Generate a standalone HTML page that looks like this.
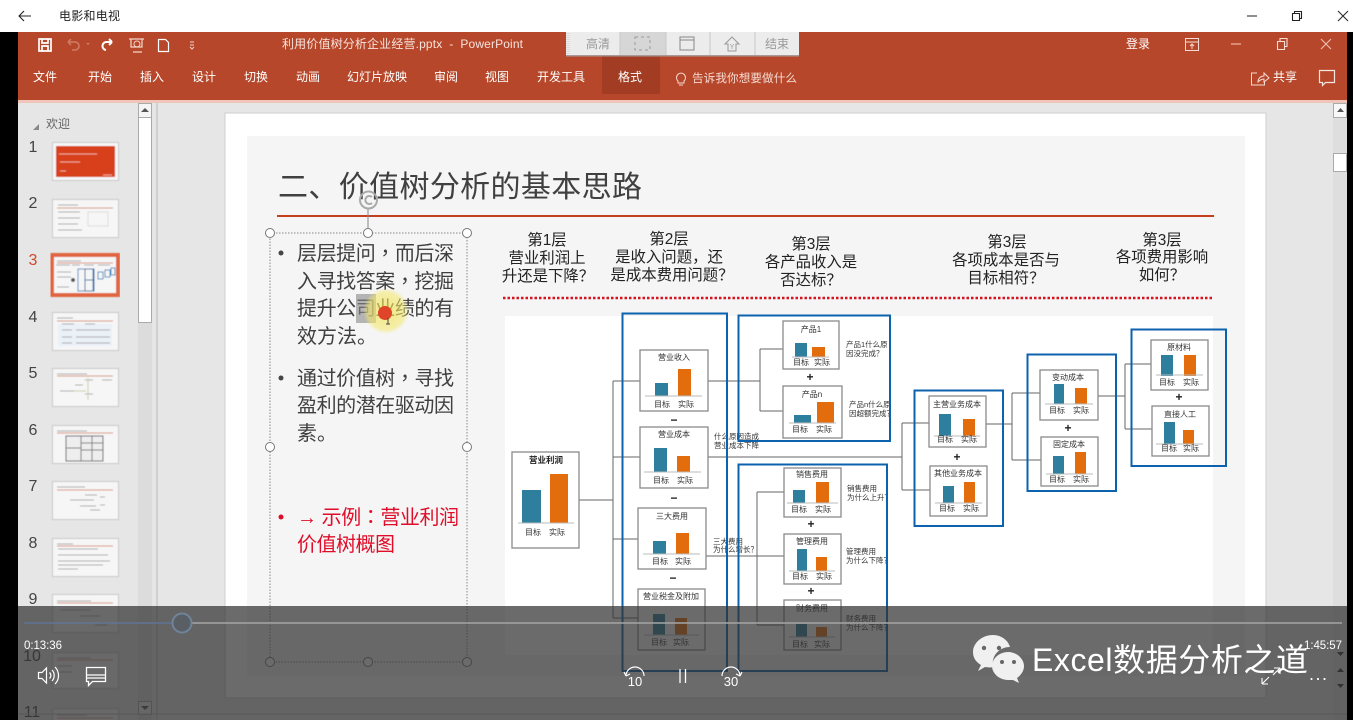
<!DOCTYPE html>
<html><head><meta charset="utf-8"><title>电影和电视</title>
<style>
html,body{margin:0;padding:0;background:#000;width:1353px;height:720px;overflow:hidden}
svg{display:block;font-family:"Liberation Sans","Noto Sans CJK SC",sans-serif}
.b{fill:#fff;stroke:#8a8a8a;stroke-width:1.3}.t{fill:#2f7f9d}.o{fill:#e36c0a}
.l{font-size:8px;fill:#333;text-anchor:middle}.h{font-size:8px;fill:#333;text-anchor:middle}
.n{font-size:7.5px;fill:#333}.bl{fill:none;stroke:#0b62ad;stroke-width:2}
.ln{stroke:#666;stroke-width:1;fill:none}.bs{stroke:#bbb;stroke-width:1}
.p{font-size:12px;font-weight:bold;fill:#222;text-anchor:middle}
.hd{font-size:15.4px;fill:#222;text-anchor:middle}
.tab{font-size:12px;fill:#fff}.bt{font-size:20px;fill:#404040}
.pc{font-family:"Noto Sans CJK TC",sans-serif}
.num{font-size:16px;fill:#444;text-anchor:middle}
.th{fill:#f6f6f6;stroke:#c8c8c8;stroke-width:1}
.tl{stroke:#aaa;stroke-width:1}.tr{stroke:#d98a75;stroke-width:1}
.hn{fill:#fff;stroke:#777;stroke-width:1}
.ic{fill:none;stroke:#fff;stroke-width:1.3}
.tb{font-size:12px;fill:#999;text-anchor:middle}
</style></head><body>
<svg width="1353" height="720" viewBox="0 0 1353 720" xmlns="http://www.w3.org/2000/svg">
<defs><radialGradient id="y"><stop offset="0" stop-color="#f2e04a" stop-opacity=".85"/><stop offset=".8" stop-color="#f4e86a" stop-opacity=".7"/><stop offset="1" stop-color="#f4e86a" stop-opacity="0"/></radialGradient>
<filter id="s" x="-2%" y="-2%" width="104%" height="104%"><feGaussianBlur stdDeviation=".35"/></filter>
<filter id="tf" x="-2%" y="-2%" width="104%" height="104%"><feGaussianBlur stdDeviation=".55"/></filter>
<filter id="u" x="-2%" y="-2%" width="104%" height="104%"><feGaussianBlur stdDeviation=".25"/></filter></defs>
<rect width="1353" height="720" fill="#000"/>
<rect width="1353" height="32" fill="#fff"/>
<path d="M31 16H19M24 11l-5 5 5 5" fill="none" stroke="#222" stroke-width="1.1"/>
<text x="59" y="20" font-size="12" fill="#222" textLength="61">电影和电视</text>
<path d="M1247 16h10" stroke="#222" stroke-width="1"/>
<path d="M1292.500 13.500h7v7h-7zM1294.500 13.500v-2h7v7h-2" fill="none" stroke="#222" stroke-width="1.100"/>
<path d="M1338 11l10 10M1348 11l-10 10" stroke="#222" stroke-width="1"/>

<rect x="18" y="32" width="1329" height="688" fill="#e6e6e6"/>
<rect x="18" y="32" width="1329" height="68" fill="#b7472a"/>
<rect x="18" y="100" width="1329" height="3" fill="#eec5b8"/>
<rect x="602" y="56" width="58" height="38" fill="#a23d24"/>

<!-- QAT -->
<path d="M39 39h12v12h-12zM42 39v4h6v-4M42 51v-5h6v5" fill="none" stroke="#fff" stroke-width="1.700"/>
<path d="M68 42l3-3M68 42l3 3M68 42h7a3.500 3.500 0 0 1 0 8h-3" fill="none" stroke="#cf7d65" stroke-width="1.500"/>
<path d="M86 43l2 2 2-2" fill="#cf7d65"/>
<path d="M112 42l-3-3M112 42l-3 3M112 42h-5a4 4 0 0 0-1 8" fill="none" stroke="#fff" stroke-width="2"/>
<path d="M129 39h15M131 39v8h11v-8M133 52h9" fill="none" stroke="#f3d5cc" stroke-width="1.200"/><circle cx="137" cy="44" r="3" fill="none" stroke="#f3d5cc"/>
<path d="M158.500 39.500h7l3 3v9h-10z" fill="none" stroke="#fff" stroke-width="1.200"/>
<path d="M190 42h4M190 45h4M190 47l2 2 2-2" fill="none" stroke="#f3d5cc"/>
<text x="282" y="48" font-size="12" fill="#f7e3dd" textLength="241" xml:space="preserve">利用价值树分析企业经营.pptx  -  PowerPoint</text>

<!-- Floating toolbar -->
<rect x="566" y="32" width="233" height="23" fill="#ececec"/>
<rect x="566" y="55" width="233" height="1.500" fill="#a99"/>
<path d="M567 33v21M569 33v21" stroke="#ccc" stroke-dasharray="1 1"/>
<rect x="620" y="32" width="46" height="23" fill="#d6d6d6"/>
<path d="M620 32v23M666 32v23M710 32v23M755 32v23" stroke="#c8c8c8"/>
<text class="tb" x="598" y="48">高清</text>
<rect x="635" y="37" width="15" height="13" fill="none" stroke="#999" stroke-dasharray="3 3"/>
<path d="M680 37h14v13h-14zM680 40h14" fill="none" stroke="#888"/>
<path d="M725 44l7-7 7 7h-3v7h-8v-7z" fill="none" stroke="#999"/><text x="732" y="49" font-size="7" fill="#999" text-anchor="middle">Y</text>
<text class="tb" x="777" y="48">结束</text>

<!-- Tabs -->
<g class="tab-g">
<text class="tab" x="33" y="81">文件</text><text class="tab" x="88" y="81">开始</text><text class="tab" x="140" y="81">插入</text><text class="tab" x="192" y="81">设计</text><text class="tab" x="244" y="81">切换</text><text class="tab" x="296" y="81">动画</text><text class="tab" x="347" y="81">幻灯片放映</text><text class="tab" x="434" y="81">审阅</text><text class="tab" x="485" y="81">视图</text><text class="tab" x="537" y="81">开发工具</text><text class="tab" x="618" y="81">格式</text>
</g>
<path d="M678 81a4.500 4.500 0 1 1 6 0v2h-6zM679 85h4" fill="none" stroke="#f6d9d0"/>
<text x="692" y="82" font-size="11.600" fill="#f6d9d0" textLength="105">告诉我你想要做什么</text>
<text class="tab" x="1126" y="48">登录</text>
<path d="M1185.500 38.500h13v12h-13zM1185.500 42h13M1192 44v5M1190 46l2-2 2 2" fill="none" stroke="#f6dcd4"/>
<path d="M1231 44h10" stroke="#f0b8a8" stroke-width="1.200"/>
<path d="M1277.500 41.500h7v8h-7zM1280 41v-2.500h7v8h-2.500" fill="none" stroke="#f6dcd4" stroke-width="1.100"/>
<path d="M1321 39l10 10M1331 39l-10 10" stroke="#f0c0b0" stroke-width="1.100"/>
<path d="M1257 73h-5.500v12h13v-4M1258 82c0-4 3-6 6-6v-3l5 5-5 4v-3c-2 0-4 1-6 3z" fill="none" stroke="#f6dcd4" stroke-width="1"/>
<text class="tab" x="1273" y="81">共享</text>
<path d="M1319.500 70.500h15v12h-9l-3 3v-3h-3z" fill="none" stroke="#f6e5e0" stroke-width="1.200"/>

<!-- Left panel -->
<rect x="138" y="103" width="14" height="617" fill="#dcdcdc"/>
<rect x="138.500" y="103.500" width="13" height="14" fill="#f5f5f5" stroke="#aaa"/>
<path d="M141 112l4-4 4 4z" fill="#555"/>
<rect x="138.500" y="117.500" width="13" height="205" fill="#fff" stroke="#aaa"/>
<rect x="138.500" y="701.500" width="13" height="13" fill="#f0f0f0" stroke="#aaa"/>
<path d="M141 706l4 4 4-4z" fill="#555"/>
<path d="M157 103v617" stroke="#c8c8c8" stroke-width="1.500"/>
<path d="M33 130l6-6v6z" fill="#888"/>
<text x="46" y="128" font-size="12" fill="#666">欢迎</text>
<text class="num" x="33" y="152">1</text><text class="num" x="33" y="208">2</text><text class="num" x="33" y="265" style="fill:#d24726">3</text><text class="num" x="33" y="322">4</text><text class="num" x="33" y="378">5</text><text class="num" x="33" y="435">6</text><text class="num" x="33" y="491">7</text><text class="num" x="33" y="548">8</text><text class="num" x="33" y="604">9</text><text class="num" x="32" y="661">10</text><text class="num" x="32" y="717">11</text>

<g filter="url(#tf)">
<rect class="th" x="52.500" y="142.500" width="66" height="38"/>
<rect x="56" y="146" width="59" height="31" fill="#d8411f"/>
<path d="M59 154h38M60 162h20M60 171h6M103 175h9" stroke="#f0a994" stroke-width="1"/>

<rect class="th" x="52.500" y="199.500" width="66" height="38"/>
<path class="tr" d="M57 208h56"/><path class="tl" d="M58 205h20M58 212h22M58 218h22M58 224h20M58 230h24"/><path d="M88 212h20v14h-20z" fill="none" stroke="#ddd"/>

<rect x="52" y="255" width="66" height="40" fill="#f6f6f6" stroke="#e0653f" stroke-width="4"/>
<path class="tl" d="M57 261h24M56 265h14M72 265h8M84 265h10M98 265h12M57 272h14M57 277h14M57 287h12"/>
<path class="tr" d="M57 263h56"/>
<path d="M78 269h15v22h-15z" fill="none" stroke="#3a88c0"/><rect x="85" y="269" width="9" height="11" fill="none" stroke="#2a70a8"/><rect x="85" y="280" width="9" height="11" fill="none" stroke="#2a70a8"/><rect x="98" y="272" width="5" height="7" fill="none" stroke="#3a88c0"/><rect x="105" y="270" width="5" height="7" fill="none" stroke="#3a88c0"/><rect x="111" y="268" width="4" height="7" fill="none" stroke="#3a88c0"/>
<circle cx="73" cy="280" r="2" fill="#555"/>

<rect class="th" x="52.500" y="312.500" width="66" height="38"/>
<path class="tr" d="M57 321h56"/><rect x="58" y="324" width="54" height="22" fill="#eaf1f7"/><path class="tl" d="M57 318h16M62 324h12M85 324h10M62 330h10M76 330h34M62 337h10M76 337h34M62 343h10M76 343h34"/>

<rect class="th" x="52.500" y="368.500" width="66" height="38"/>
<path class="tr" d="M57 376h56"/><path class="tl" d="M57 374h30M60 391h14M75 385h8M85 380h8M85 394h8M102 380h10"/><path d="M88 378v22M74 391h12" fill="none" stroke="#cca"/>

<rect class="th" x="52.500" y="425.500" width="66" height="38"/>
<path class="tr" d="M57 433h56"/><path class="tl" d="M57 431h30"/><rect x="66" y="436" width="37" height="25" fill="#eee" stroke="#555"/><path d="M81 436v25M92 436v25M81 443h22M81 450h22M66 448h15" stroke="#777" fill="none"/>

<rect class="th" x="52.500" y="481.500" width="66" height="38"/>
<path class="tr" d="M57 490h56"/><path class="tl" d="M57 487h28M70 500h24M80 506h16M85 495h12M90 510h10M100 497h5M100 505h5"/>

<rect class="th" x="52.500" y="538.500" width="66" height="38"/>
<path class="tr" d="M57 546h56"/><path class="tl" d="M57 544h16M58 549h40M58 555h50M58 561h52M58 565h45M58 569h20"/>

<rect class="th" x="52.500" y="594.500" width="66" height="38"/>
<path class="tr" d="M57 603h56"/><path class="tl" d="M57 601h34M60 610h30M80 616h20M95 625h12"/>
<rect class="th" x="52.500" y="652.500" width="66" height="36"/>
<path class="tr" d="M57 660h56"/><path class="tl" d="M57 658h34M58 666h14M58 672h14"/>
<rect class="th" x="52.500" y="708.500" width="66" height="20"/>
<path class="tl" d="M57 715h30"/><path class="tr" d="M57 718h56"/>
</g>

<!-- Right scrollbar -->
<rect x="1333" y="103" width="14" height="617" fill="#dedede"/>
<rect x="1333.500" y="103.500" width="13" height="14" fill="#f8f8f8" stroke="#aaa"/><path d="M1337 112l3.500-4 3.500 4z" fill="#555"/>
<rect x="1333.500" y="153.500" width="13" height="18" fill="#fff" stroke="#aaa"/>
<path d="M1337 652l3.500 4 3.500-4zM1337 672l3.500-4 3.500 4zM1337 684l3.500 4 3.500-4z" fill="#333"/>

<!-- Slide -->
<rect x="225" y="113" width="1041" height="585" fill="#fff" stroke="#cfcfcf"/>
<rect x="247" y="136" width="998" height="540" fill="#f5f5f5"/>
<g filter="url(#u)">
<text x="278" y="197" font-size="30" fill="#404040" textLength="364">二、价值树分析的基本思路</text>
<path d="M277 216h937" stroke="#c33f1f" stroke-width="2"/>

<circle cx="281" cy="253" r="2.500" fill="#444"/>
<text class="bt" x="297" y="260" textLength="157">层层提问<tspan class="pc">，</tspan>而后深</text>
<text class="bt" x="297" y="288" textLength="157">入寻找答案<tspan class="pc">，</tspan>挖掘</text>
<text class="bt" x="297" y="315" textLength="157">提升公司业绩的有</text>
<text class="bt" x="297" y="343">效方法。</text>
<circle cx="281" cy="378" r="2.500" fill="#444"/>
<text class="bt" x="297" y="385" textLength="157">通过价值树<tspan class="pc">，</tspan>寻找</text>
<text class="bt" x="297" y="412" textLength="157">盈利的潜在驱动因</text>
<text class="bt" x="297" y="440">素。</text>
<circle cx="281" cy="517" r="2.500" fill="#e0102a"/>
<text class="bt" x="297" y="524" textLength="162" style="fill:#e0102a">→ 示例<tspan class="pc">：</tspan>营业利润</text>
<text class="bt" x="297" y="551" textLength="98" style="fill:#e0102a">价值树概图</text>
</g>

<rect x="356" y="294" width="20" height="29" fill="#888" opacity=".6"/>
<circle cx="386" cy="311" r="23" fill="url(#y)" opacity=".8"/>
<circle cx="385" cy="313" r="7" fill="#e0452a"/>
<path d="M388 318v6M386 324h4" stroke="#444"/>

<rect x="270" y="233" width="197" height="429" fill="none" stroke="#888" stroke-dasharray="1.500 1.500"/>
<path d="M368 208v25" stroke="#888"/>
<circle cx="368.500" cy="200" r="8.500" fill="none" stroke="#aaa" stroke-width="2"/><path d="M372 203a4 4 0 1 1 0-6" fill="none" stroke="#aaa" stroke-width="2"/>
<circle class="hn" cx="270" cy="233" r="4.500"/><circle class="hn" cx="368" cy="233" r="4.500"/><circle class="hn" cx="467" cy="233" r="4.500"/><circle class="hn" cx="270" cy="447" r="4.500"/><circle class="hn" cx="467" cy="447" r="4.500"/><circle class="hn" cx="270" cy="662" r="4.500"/><circle class="hn" cx="368" cy="662" r="4.500"/><circle class="hn" cx="467" cy="662" r="4.500"/>

<!-- Headers -->
<g filter="url(#u)">
<text class="hd" x="547" y="245">第1层</text><text class="hd" x="547" y="263">营业利润上</text><text class="hd" x="548" y="281">升还是下降？</text>
<text class="hd" x="669" y="244">第2层</text><text class="hd" x="669" y="262">是收入问题，还</text><text class="hd" x="672" y="280">是成本费用问题？</text>
<text class="hd" x="811" y="249">第3层</text><text class="hd" x="811" y="267">各产品收入是</text><text class="hd" x="811" y="285">否达标？</text>
<text class="hd" x="1007" y="247">第3层</text><text class="hd" x="1006" y="265">各项成本是否与</text><text class="hd" x="1006" y="283">目标相符？</text>
<text class="hd" x="1162" y="245">第3层</text><text class="hd" x="1162" y="262">各项费用影响</text><text class="hd" x="1162" y="280">如何？</text>
</g>
<path d="M503 298h710" stroke="#d5121e" stroke-width="2.500" stroke-dasharray="2.500 2"/>

<!-- Diagram -->
<rect x="505" y="316" width="708" height="339" fill="#fff"/>
<g filter="url(#s)">
<path class="ln" d="M579 500h34M613 381v237M613 381h27M613 457h27M613 539h25M613 618h25M708 381h52M760 349v62M760 349h23M760 411h23M707 457h195M902 423v67M902 423h27M902 490h28M706 556h78M757 492v133M757 492h27M757 625h27M986 424h26M1012 393v67M1012 393h28M1012 460h29M1098 396h27M1125 364v65M1125 364h26M1125 429h27" stroke-width="1.200"/>

<rect class="b" x="512" y="452" width="67" height="96"/><rect class="t" x="522" y="490" width="19" height="33"/><rect class="o" x="550" y="474" width="18" height="49"/><path class="bs" d="M518 523h56"/>
<text class="p" x="546" y="463" style="font-size:8.500px">营业利润</text><text class="l" x="533" y="535">目标</text><text class="l" x="557" y="535">实际</text>

<rect class="b" x="640" y="350" width="68" height="61"/><rect class="t" x="655" y="383" width="13" height="13"/><rect class="o" x="678" y="369" width="13" height="27"/><path class="bs" d="M645 396h57"/>
<text class="h" x="674" y="360">营业收入</text><text class="l" x="662" y="407">目标</text><text class="l" x="686" y="407">实际</text>

<rect class="b" x="640" y="427" width="68" height="61"/><rect class="t" x="654" y="448" width="13" height="24"/><rect class="o" x="677" y="456" width="13" height="16"/><path class="bs" d="M644 472h57"/>
<text class="h" x="674" y="437">营业成本</text><text class="l" x="661" y="483">目标</text><text class="l" x="685" y="483">实际</text>

<rect class="b" x="638" y="508" width="68" height="61"/><rect class="t" x="653" y="541" width="13" height="13"/><rect class="o" x="676" y="533" width="13" height="21"/><path class="bs" d="M643 554h57"/>
<text class="h" x="672" y="519">三大费用</text><text class="l" x="660" y="564">目标</text><text class="l" x="683" y="564">实际</text>

<rect class="b" x="638" y="589" width="67" height="61"/><rect class="t" x="653" y="614" width="12" height="21"/><rect class="o" x="675" y="618" width="12" height="17"/><path class="bs" d="M644 635h55"/>
<text class="h" x="671" y="599">营业税金及附加</text><text class="l" x="659" y="645">目标</text><text class="l" x="681" y="645">实际</text>

<rect class="b" x="783" y="321" width="56" height="48"/><rect class="t" x="795" y="343" width="12" height="14"/><rect class="o" x="812" y="347" width="13" height="10"/><path class="bs" d="M792 357h37"/>
<text class="h" x="811" y="332">产品1</text><text class="l" x="801" y="365">目标</text><text class="l" x="822" y="365">实际</text>

<rect class="b" x="783" y="386" width="59" height="52"/><rect class="t" x="794" y="415" width="17" height="8"/><rect class="o" x="817" y="402" width="17" height="21"/><path class="bs" d="M789 423h47"/>
<text class="h" x="812" y="397">产品n</text><text class="l" x="800" y="432">目标</text><text class="l" x="824" y="432">实际</text>

<rect class="b" x="784" y="468" width="57" height="49"/><rect class="t" x="793" y="490" width="12" height="13"/><rect class="o" x="816" y="482" width="13" height="21"/><path class="bs" d="M787 503h51"/>
<text class="h" x="812" y="477">销售费用</text><text class="l" x="799" y="512">目标</text><text class="l" x="823" y="512">实际</text>

<rect class="b" x="784" y="534" width="57" height="50"/><rect class="t" x="797" y="549" width="10" height="22"/><rect class="o" x="816" y="557" width="11" height="14"/><path class="bs" d="M789 571h46"/>
<text class="h" x="812" y="544">管理费用</text><text class="l" x="800" y="579">目标</text><text class="l" x="824" y="579">实际</text>

<rect class="b" x="784" y="600" width="57" height="50"/><rect class="t" x="796" y="624" width="11" height="13"/><rect class="o" x="816" y="627" width="11" height="10"/><path class="bs" d="M789 637h46"/>
<text class="h" x="812" y="611">财务费用</text><text class="l" x="800" y="647">目标</text><text class="l" x="822" y="647">实际</text>

<rect class="b" x="929" y="396" width="57" height="51"/><rect class="t" x="939" y="414" width="12" height="22"/><rect class="o" x="963" y="419" width="12" height="17"/><path class="bs" d="M934 436h46"/>
<text class="h" x="957" y="407">主营业务成本</text><text class="l" x="945" y="442">目标</text><text class="l" x="969" y="442">实际</text>

<rect class="b" x="930" y="466" width="57" height="50"/><rect class="t" x="943" y="486" width="11" height="17"/><rect class="o" x="964" y="482" width="11" height="21"/><path class="bs" d="M935 503h47"/>
<text class="h" x="958" y="476">其他业务成本</text><text class="l" x="947" y="511">目标</text><text class="l" x="971" y="511">实际</text>

<rect class="b" x="1040" y="370" width="58" height="50"/><rect class="t" x="1054" y="384" width="10" height="20"/><rect class="o" x="1075" y="388" width="12" height="16"/><path class="bs" d="M1045 404h48"/>
<text class="h" x="1068" y="380">变动成本</text><text class="l" x="1057" y="413">目标</text><text class="l" x="1081" y="413">实际</text>

<rect class="b" x="1041" y="437" width="57" height="49"/><rect class="t" x="1053" y="456" width="11" height="18"/><rect class="o" x="1075" y="452" width="11" height="22"/><path class="bs" d="M1046 474h47"/>
<text class="h" x="1069" y="447">固定成本</text><text class="l" x="1057" y="482">目标</text><text class="l" x="1081" y="482">实际</text>

<rect class="b" x="1151" y="340" width="57" height="50"/><rect class="t" x="1161" y="355" width="12" height="21"/><rect class="o" x="1184" y="355" width="12" height="21"/><path class="bs" d="M1156 375h47"/>
<text class="h" x="1179" y="350">原材料</text><text class="l" x="1167" y="385">目标</text><text class="l" x="1191" y="385">实际</text>

<rect class="b" x="1152" y="406" width="57" height="50"/><rect class="t" x="1164" y="422" width="11" height="22"/><rect class="o" x="1183" y="430" width="11" height="14"/><path class="bs" d="M1156 444h47"/>
<text class="h" x="1180" y="417">直接人工</text><text class="l" x="1169" y="451">目标</text><text class="l" x="1191" y="451">实际</text>

<g font-size="12" font-weight="bold" fill="#222" text-anchor="middle">
<text x="810" y="381">+</text><text x="811" y="528">+</text><text x="811" y="595">+</text><text x="957" y="461">+</text><text x="1068" y="432">+</text><text x="1179" y="401">+</text>
<text x="674" y="424">−</text><text x="674" y="502">−</text><text x="673" y="582">−</text>
</g>

<text class="n" x="846" y="347">产品1什么原</text><text class="n" x="846" y="356">因没完成？</text>
<text class="n" x="849" y="407">产品n什么原</text><text class="n" x="849" y="416">因超额完成？</text>
<text class="n" x="714" y="439">什么原因造成</text><text class="n" x="714" y="448">营业成本下降</text>
<text class="n" x="713" y="544">三大费用</text><text class="n" x="713" y="552">为什么增长？</text>
<text class="n" x="847" y="491">销售费用</text><text class="n" x="847" y="500">为什么上升？</text>
<text class="n" x="846" y="554">管理费用</text><text class="n" x="846" y="563">为什么下降？</text>
<text class="n" x="846" y="621">财务费用</text><text class="n" x="846" y="630">为什么下降？</text>

<rect class="bl" x="622.500" y="313.500" width="104.500" height="357.500"/>
<rect class="bl" x="738.500" y="315.500" width="151.500" height="125.500"/>
<rect class="bl" x="738.500" y="464.500" width="148.500" height="206.500"/>
<rect class="bl" x="914.500" y="390.500" width="88.500" height="135.500"/>
<rect class="bl" x="1027.500" y="354.500" width="88.500" height="136.500"/>
<rect class="bl" x="1131.500" y="329.500" width="94.500" height="136.500"/>
</g>

<!-- Status bar remnant -->
<path d="M18 714h1329" stroke="#bbb"/>

<!-- Player overlay -->
<rect x="18" y="606" width="1329" height="114" fill="#323232" fill-opacity=".72"/>
<path d="M172 623H1342" stroke="#a5a5a5" stroke-width="1.500"/>
<path d="M24 623h148" stroke="#5f7596" stroke-width="1.500"/>
<circle cx="182" cy="623" r="9.500" fill="#5a5f66" stroke="#6f8499" stroke-width="2"/>
<text x="24" y="649" font-size="11.500" fill="#fff" textLength="38">0:13:36</text>
<text x="1304" y="649" font-size="11.500" fill="#fff" textLength="38">1:45:57</text>

<path d="M38.500 672.500h3.500l4.500-4.500v15l-4.500-4.500h-3.500zM49.500 672.500a4 4 0 0 1 0 6M52 670a8 8 0 0 1 0 11M55 667a12 12 0 0 1 0 17" fill="none" stroke="#fff" stroke-width="1.200"/>
<path d="M86.500 667.500h19v14h-13l-4 4v-4h-2zM87 675h18M87 678h18" fill="none" stroke="#fff" stroke-width="1.300"/>

<path d="M626 676a9 9 0 0 1 18 0M626 676l-2-4M626 676l4-2" fill="none" stroke="#fff" stroke-width="1.200"/>
<text x="635" y="686" font-size="13" fill="#fff" text-anchor="middle">10</text>
<path d="M680 669v14M685.500 669v14" stroke="#fff" stroke-width="1.300"/>
<path d="M722 676a9 9 0 0 1 18 0M740 676l2-4M740 676l-4-2" fill="none" stroke="#fff" stroke-width="1.200"/>
<text x="731" y="686" font-size="13" fill="#fff" text-anchor="middle">30</text>
<path d="M1262 684l7-7M1262 684v-6M1262 684h6M1280 668l-7 7M1280 668v6M1280 668h-6" fill="none" stroke="#fff" stroke-width="1.100"/>

<!-- Watermark -->
<path d="M993 635c-11 0-20 8-20 17 0 6 3 10 8 13l-3 6 7-4c2 0 5 1 8 0-2-11 6-20 17-20-2-7-9-12-17-12z" fill="#f0f0f0"/>
<circle cx="984" cy="648" r="2.200" fill="#666"/><circle cx="999" cy="648" r="2.200" fill="#666"/>
<path d="M1008 652c-9 0-16 7-16 14s7 14 16 14c2 0 4 0 5 0l6 3-2-5c4-3 7-7 7-12 0-7-7-14-16-14z" fill="#f0f0f0"/>
<circle cx="1002" cy="662" r="2" fill="#666"/><circle cx="1014" cy="662" r="2" fill="#666"/>
<text x="1032" y="671" font-size="32" fill="#fff" textLength="276">Excel数据分析之道</text>
<text x="1309" y="680" font-size="18" fill="#fff" textLength="18">...</text>
</svg>
</body></html>
